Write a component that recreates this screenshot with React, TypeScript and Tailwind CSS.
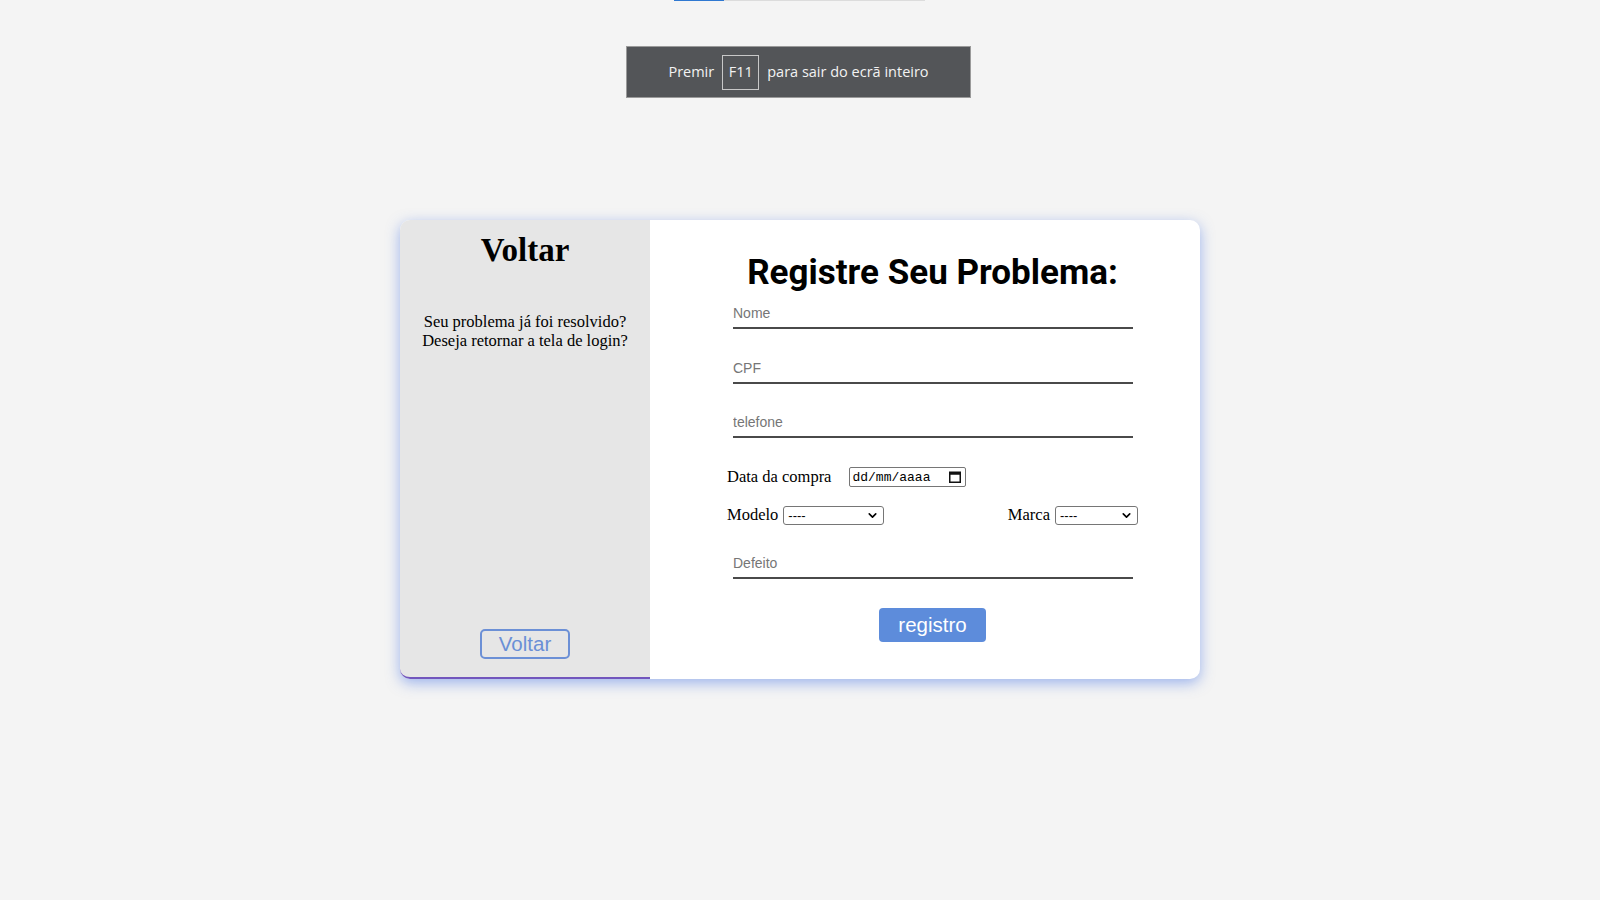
import { ChevronDown } from "lucide-react";

const serif = "font-['Liberation_Serif','Times_New_Roman',serif]";
const sans = "font-['Liberation_Sans',Arial,sans-serif]";

const UnderlineInput = ({ placeholder, className = "" }: { placeholder: string; className?: string }) => (
  <input
    placeholder={placeholder}
    className={`ml-[6px] block h-[30px] w-[400px] border-b-2 border-[#4a4a4a] bg-transparent px-0 text-[14px] text-black outline-none placeholder:text-[#767676] ${sans} ${className}`}
  />
);

const FakeSelect = ({ width }: { width: string }) => (
  <div
    className={`flex h-[19px] items-center justify-between rounded-[3px] border border-[#767676] bg-white pl-[4px] pr-[4px] text-[13px] text-black ${sans} ${width}`}
  >
    <span className="leading-none">----</span>
    <ChevronDown size={13} strokeWidth={3} />
  </div>
);

const CalendarIcon = () => (
  <svg width="12" height="12" viewBox="0 0 12 12" fill="none">
    <rect x="0.75" y="1.25" width="10.5" height="10" stroke="#111" strokeWidth="1.5" />
    <rect x="0.75" y="1.25" width="10.5" height="2.5" fill="#111" />
  </svg>
);

export default function App() {
  return (
    <div className="relative min-h-screen bg-[#f4f4f4]">
      {/* browser fullscreen overlays */}
      <div className="absolute left-[674px] top-0 flex h-px">
        <div className="w-[50px] bg-[#2f78d1]" />
        <div className="w-[201px] bg-[#dcdcdc]" />
      </div>
      <div className="absolute left-[626px] top-[46px] flex h-[52px] w-[345px] items-center justify-center gap-[8px] border border-[#9a9a9a] bg-[#535558] text-[14.5px] text-[#f2f2f2] font-['Open_Sans','Noto_Sans',sans-serif]">
        <span>Premir</span>
        <span className="flex h-[35px] w-[37px] items-center justify-center border border-[#c8c8c8]">F11</span>
        <span>para sair do ecrã inteiro</span>
      </div>

      <div className="pt-[220px]">
        <div className="mx-auto flex h-[459px] w-[800px] rounded-[10px] bg-white shadow-[0_4px_14px_rgba(70,115,230,0.5)]">
          {/* left panel */}
          <div className={`flex w-[250px] flex-col items-center rounded-l-[10px] border-b-2 border-[#7256bd] bg-[#e6e6e6] text-black ${serif}`}>
            <h1 className="mt-[11px] text-[33px] font-bold leading-[38px]">Voltar</h1>
            <p className="mt-[43px] text-center text-[16.5px] leading-[19px]">
              Seu problema já foi resolvido?
              <br />
              Deseja retornar a tela de login?
            </p>
            <button
              className={`mt-auto mb-[18px] h-[30px] w-[90px] rounded-[5px] border-2 border-[#6c90d6] text-[20.5px] leading-none text-[#6a8fd6] ${sans}`}
            >
              Voltar
            </button>
          </div>

          {/* right panel */}
          <div className="flex flex-1 flex-col pl-[77px] pt-[32px]">
            <div className="flex w-[411px] flex-col">
              <h2 className="text-center text-[35px] font-bold leading-[42px] text-black font-['Roboto','Open_Sans',sans-serif]">
                Registre Seu Problema:
              </h2>
              <UnderlineInput placeholder="Nome" className="mt-[5px]" />
              <UnderlineInput placeholder="CPF" className="mt-[25px]" />
              <UnderlineInput placeholder="telefone" className="mt-[24px]" />

              <div className={`mt-[29px] flex h-[20px] items-center text-[16.5px] text-black ${serif}`}>
                <span>Data da compra</span>
                <div className="ml-[18px] flex h-[20px] w-[117px] items-center justify-between rounded-[2px] border border-[#767676] pl-[2px] pr-[4px]">
                  <span className="text-[13px] leading-none font-['Liberation_Mono','DejaVu_Sans_Mono',monospace]">dd/mm/aaaa</span>
                  <CalendarIcon />
                </div>
              </div>

              <div className={`mt-[19px] flex h-[19px] items-center justify-between text-[16.5px] text-black ${serif}`}>
                <div className="flex items-center gap-[5px]">
                  <span>Modelo</span>
                  <FakeSelect width="w-[101px]" />
                </div>
                <div className="flex items-center gap-[5px]">
                  <span>Marca</span>
                  <FakeSelect width="w-[83px]" />
                </div>
              </div>

              <UnderlineInput placeholder="Defeito" className="mt-[24px]" />

              <button
                className={`mx-auto mt-[29px] h-[34px] w-[107px] rounded-[4px] bg-[#5d8cdb] text-[20.5px] leading-none text-white ${sans}`}
              >
                registro
              </button>
            </div>
          </div>
        </div>
      </div>
    </div>
  );
}
